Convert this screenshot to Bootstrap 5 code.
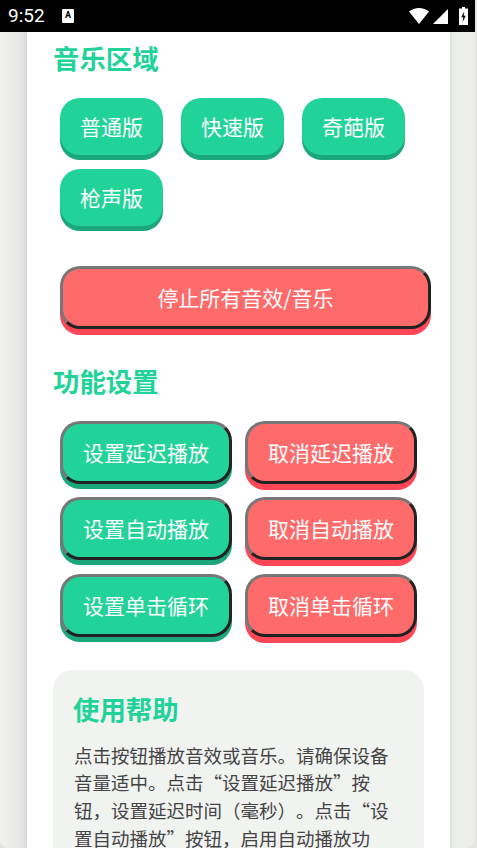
<!DOCTYPE html>
<html lang="zh">
<head>
<meta charset="utf-8">
<meta name="viewport" content="width=device-width, initial-scale=1">
<link href="https://cdn.jsdelivr.net/npm/bootstrap@5.3.0/dist/css/bootstrap.min.css" rel="stylesheet">
<style>
html,body{height:848px;overflow:hidden;margin:0;background:#e4e5e3;font-family:"Noto Sans CJK SC","Liberation Sans",sans-serif;text-spacing-trim:space-all;}
.phone{width:475px;height:848px;overflow:hidden;background:linear-gradient(90deg,#f1f2f0 0,#e9eae8 100%);border-radius:0 0 9px 9px;}
.statusbar{height:32px;background:#000;color:#fff;padding:0 7px 0 8px;flex:none;}
.clock{font-family:Roboto,sans-serif;font-size:19px;line-height:32px;width:54px;}
.a-chip{width:12px;height:14px;background:#fff;color:#000;border-radius:1px;font:700 9px/12px Roboto,sans-serif;text-align:center;}
.batt-ic{margin-left:11px;}
.stage{background:linear-gradient(90deg,#f1f2f0 0,#e2e4e2 27px,#e2e4e2 423px,#eceeec 448px);padding:0 25px 0 27px;min-height:0;}
.sheet{background:#fff;height:816px;padding:12.5px 26px 0;overflow:hidden;box-shadow:0 0 5px rgba(0,0,0,.12);}
.sec-title{font-size:26.4px;line-height:31px;font-weight:700;color:#22d399;margin:0;}
.first-title{margin-top:-3px;}
.tone-row{padding-left:7px;margin-top:25px;gap:14px 18px;}
.tone-btn{background:#22d399;color:#fff;border:0;border-radius:20px;font-size:21px;line-height:31px;padding:13px 20px;box-shadow:0 5px 0 #1ca67b;}
.stop-wrap{padding-left:7px;margin:40px 0 0;}
.act-btn{color:#fff;border-width:3px;border-style:solid;border-color:#777 #222 #222 #777;border-radius:20px;font-size:21px;line-height:31px;padding:13px 20px;}
.act-green{background:#22d399;box-shadow:0 5px 0 #1ca67b;}
.act-red{background:#ff6b6b;box-shadow:0 6px 0 #ff4757;}
.stop-btn{width:371px;}
.sec-two{margin-top:36.5px;}
.act-grid{padding-left:7px;margin-top:24.5px;display:grid;grid-template-columns:172px 172px;gap:13.5px 13px;}
.act-grid .act-btn{padding-left:0;padding-right:0;}
.help-box{background:#f1f3f1;border-radius:20px;margin-top:33px;padding:23px 21px 20px;width:371px;}
.help-title{margin-left:-1px;}
.help-text{font-size:18.5px;line-height:27.75px;color:#444;margin:18px 0 0;}
</style>
</head>
<body>
<div class="phone d-flex flex-column">
  <div class="statusbar d-flex align-items-center">
    <span class="clock">9:52</span>
    <span class="a-chip">A</span>
    <span class="ms-auto d-flex align-items-center">
      <svg width="20" height="16" viewBox="0 0 20 16"><path d="M0 3.6C2.8 1.3 6.2 0 10 0s7.200 1.300 10 3.600L10 16z" fill="#fff"/></svg>
      <svg class="ms-1" width="15" height="15" viewBox="0 0 15 15"><path d="M15 0V15H0z" fill="#fff"/></svg>
      <svg class="batt-ic" width="9" height="18" viewBox="0 0 9 18"><path d="M3 0h3v1.500h3V18H0V1.500h3z" fill="#fff"/><path d="M5.300 4.500 2.200 10.300h2.100L3.600 15l3.200-6.300H4.700z" fill="#000"/></svg>
    </span>
  </div>
  <div class="stage flex-grow-1">
    <div class="sheet">
      <h2 class="sec-title first-title">音乐区域</h2>
      <div class="tone-row d-flex flex-wrap">
        <button class="btn tone-btn" type="button">普通版</button>
        <button class="btn tone-btn" type="button">快速版</button>
        <button class="btn tone-btn" type="button">奇葩版</button>
        <button class="btn tone-btn" type="button">枪声版</button>
      </div>
      <div class="stop-wrap">
        <button class="btn act-btn act-red stop-btn" type="button">停止所有音效/音乐</button>
      </div>
      <h2 class="sec-title sec-two">功能设置</h2>
      <div class="act-grid">
        <button class="btn act-btn act-green" type="button">设置延迟播放</button>
        <button class="btn act-btn act-red" type="button">取消延迟播放</button>
        <button class="btn act-btn act-green" type="button">设置自动播放</button>
        <button class="btn act-btn act-red" type="button">取消自动播放</button>
        <button class="btn act-btn act-green" type="button">设置单击循环</button>
        <button class="btn act-btn act-red" type="button">取消单击循环</button>
      </div>
      <div class="help-box">
        <h2 class="sec-title help-title">使用帮助</h2>
        <p class="help-text">点击按钮播放音效或音乐。请确保设备音量适中。点击“设置延迟播放”按钮，设置延迟时间（毫秒）。点击“设置自动播放”按钮，启用自动播放功能。</p>
      </div>
    </div>
  </div>
</div>
<script src="https://cdn.jsdelivr.net/npm/bootstrap@5.3.0/dist/js/bootstrap.bundle.min.js"></script>
</body>
</html>
